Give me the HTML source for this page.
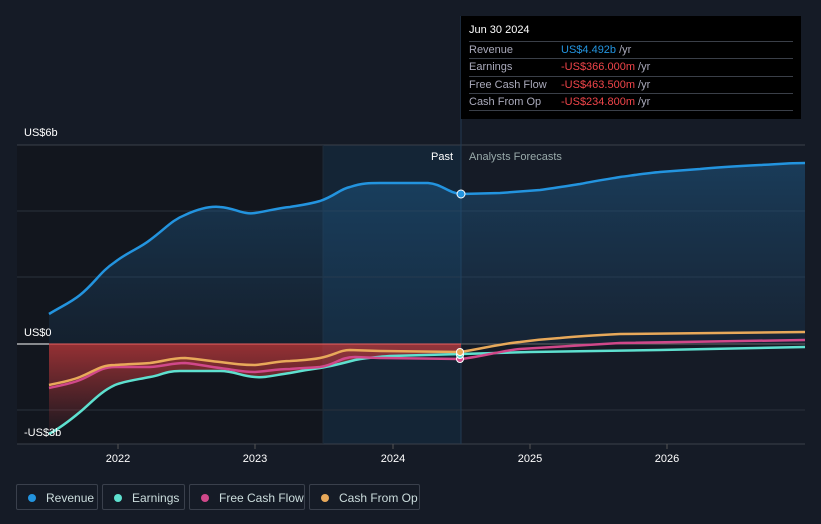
<!DOCTYPE html><html><head><style>
body{margin:0;background:#151b26;font-family:"Liberation Sans",sans-serif;width:821px;height:524px;overflow:hidden;position:relative}
.tt{position:absolute;left:461px;top:16px;width:340px;height:103px;background:#000;color:#fff;font-size:11px}
.tt .r{position:absolute;left:8px;width:324px;border-top:1px solid #3a3f48;height:17px;line-height:17px;color:#aab}
.tt .r b{font-weight:normal;position:absolute;left:92px}
.lg{position:absolute;top:484px;height:26px;border:1px solid #3a404c;border-radius:2px;color:#cdd;font-size:12px;line-height:26px;box-sizing:border-box}
.lg i{display:inline-block;width:8px;height:8px;border-radius:50%;margin:0 10px 0 11px;vertical-align:0}
</style></head><body>
<svg width="821" height="524" style="position:absolute;left:0;top:0">
<defs>
<linearGradient id="bl" x1="0" y1="0" x2="0" y2="1"><stop offset="0" stop-color="#1e5c8c" stop-opacity=".5"/><stop offset="1" stop-color="#1e4a70" stop-opacity=".2"/></linearGradient>
<linearGradient id="rd" x1="0" y1="0" x2="0" y2="1"><stop offset="0" stop-color="#c0393b" stop-opacity=".75"/><stop offset="1" stop-color="#c0393b" stop-opacity=".05"/></linearGradient>
</defs>
<rect x="17" y="145" width="306" height="299" fill="#12161e"/>
<rect x="323" y="145" width="138" height="299" fill="#142536"/>
<g stroke="#2a313c" stroke-width="1">
<line x1="17" y1="145" x2="805" y2="145" stroke="#3a404a"/><line x1="17" y1="211" x2="805" y2="211"/><line x1="17" y1="277" x2="805" y2="277"/><line x1="17" y1="410" x2="805" y2="410"/>
<line x1="17" y1="444" x2="805" y2="444" stroke="#3a404a"/><line x1="461" y1="16" x2="461" y2="444" stroke="#223a52"/><line x1="323" y1="145" x2="323" y2="444" stroke="#1e2a38"/>
</g>
<path d="M49,314 C62,306 70,303 80,295 C95,283 100,272 115,262 C128,252 140,248 150,240 C165,229 172,220 185,215 C198,209 210,206 220,207 C235,208 243,215 255,213 C268,211 278,208 290,207 C302,205 310,204 320,201 C335,196 340,189 350,187 C362,183 370,183 380,183 L428,183 C442,184 448,193 461,194 L500,193 C515,192 528,191 540,190 C555,188 567,186 580,184 C595,181 608,179 620,177 C635,175 648,173 660,172 C672,171 688,170 700,169 C720,167 740,166 760,165 C780,164 790,163 805,163 L805,344 L49,344Z" fill="url(#bl)"/>
<path d="M49,344 L461,344 L461,354 L390,356 C375,357 365,358 355,360 C340,364 332,366 320,368 C305,370 300,371 290,373 C275,375 265,378 255,377 C240,376 235,371 220,371 L180,371 C165,371 162,375 150,377 C135,380 125,381 115,385 C100,392 92,402 80,412 C68,422 60,428 49,434Z" fill="url(#rd)"/>
<line x1="17" y1="344" x2="49" y2="344" stroke="#fff" stroke-width="1"/>
<line x1="49" y1="344" x2="461" y2="344" stroke="#e86060" stroke-width="1"/>
<line x1="461" y1="344" x2="805" y2="344" stroke="#666" stroke-width="1"/>
<g fill="none" stroke-width="2.5">
<path d="M49,314 C62,306 70,303 80,295 C95,283 100,272 115,262 C128,252 140,248 150,240 C165,229 172,220 185,215 C198,209 210,206 220,207 C235,208 243,215 255,213 C268,211 278,208 290,207 C302,205 310,204 320,201 C335,196 340,189 350,187 C362,183 370,183 380,183 L428,183 C442,184 448,193 461,194 L500,193 C515,192 528,191 540,190 C555,188 567,186 580,184 C595,181 608,179 620,177 C635,175 648,173 660,172 C672,171 688,170 700,169 C720,167 740,166 760,165 C780,164 790,163 805,163" stroke="#2394df"/>
<path d="M49,434 C60,428 68,422 80,412 C92,402 100,392 115,385 C125,381 135,380 150,377 C162,375 165,371 180,371 L220,371 C235,371 240,376 255,377 C265,378 275,375 290,373 C300,371 305,370 320,368 C332,366 340,364 355,360 C365,358 375,357 390,356 L461,354 L530,352 L660,350 L805,347" stroke="#5ee0cf"/>
<path d="M49,388 C62,385 70,384 80,380 C95,374 100,367 115,367 L150,367 C165,366 172,363 185,363 C198,364 210,367 220,368 C235,370 243,372 255,372 C268,371 278,369 290,369 C302,368 310,368 320,367 C335,365 340,357 355,357 L380,358 L461,359 C485,356 500,351 520,349 L620,343 L805,340" stroke="#d0488a"/>
<path d="M49,385 C62,382 70,381 80,377 C95,371 100,365 115,365 C128,364 140,364 150,363 C165,361 172,358 185,358 C198,359 210,361 220,362 C235,364 243,365 255,365 C268,364 278,361 290,361 C302,360 310,360 320,358 C335,355 340,350 350,350 L380,351 L461,352 C485,348 500,344 520,342 C535,340 545,339 560,338 C580,336 600,335 620,334 L805,332" stroke="#e8a95a"/>
</g>
<circle cx="461" cy="194" r="4" fill="#2394df" stroke="#fff" stroke-width="1"/>
<circle cx="460" cy="359" r="3.5" fill="#d0488a" stroke="#fff" stroke-width="1"/>
<circle cx="460" cy="355" r="3.5" fill="#5ee0cf" stroke="#fff" stroke-width="1"/>
<circle cx="460" cy="352" r="3.5" fill="#e8a95a" stroke="#fff" stroke-width="1"/>
<g stroke="#555" stroke-width="1"><line x1="118" y1="444" x2="118" y2="449"/><line x1="255" y1="444" x2="255" y2="449"/><line x1="393" y1="444" x2="393" y2="449"/><line x1="530" y1="444" x2="530" y2="449"/><line x1="667" y1="444" x2="667" y2="449"/></g>
<g font-size="11" fill="#fff" text-anchor="middle"><text x="118" y="462">2022</text><text x="255" y="462">2023</text><text x="393" y="462">2024</text><text x="530" y="462">2025</text><text x="667" y="462">2026</text></g>
<g font-size="11" fill="#fff"><text x="24" y="136">US$6b</text><text x="24" y="336">US$0</text><text x="24" y="436">-US$3b</text>
<text x="453" y="160" text-anchor="end">Past</text><text x="469" y="160" fill="#9aa">Analysts Forecasts</text></g>
</svg>
<div class="tt"><div style="position:absolute;left:8px;top:8px;font-size:11px">Jun 30 2024</div>
<div class="r" style="top:25px">Revenue<b style="color:#2394df">US$4.492b <span style="color:#aab">/yr</span></b></div>
<div class="r" style="top:42px">Earnings<b style="color:#f0454a">-US$366.000m <span style="color:#aab">/yr</span></b></div>
<div class="r" style="top:60px">Free Cash Flow<b style="color:#f0454a">-US$463.500m <span style="color:#aab">/yr</span></b></div>
<div class="r" style="top:77px">Cash From Op<b style="color:#f0454a">-US$234.800m <span style="color:#aab">/yr</span></b></div>
<div style="position:absolute;left:8px;top:94px;width:324px;border-top:1px solid #3a3f48"></div></div>
<div class="lg" style="left:16px;width:82px"><i style="background:#2394df"></i>Revenue</div>
<div class="lg" style="left:102px;width:83px"><i style="background:#5ee0cf"></i>Earnings</div>
<div class="lg" style="left:189px;width:116px"><i style="background:#d0488a"></i>Free Cash Flow</div>
<div class="lg" style="left:309px;width:111px"><i style="background:#e8a95a"></i>Cash From Op</div>
</body></html>
